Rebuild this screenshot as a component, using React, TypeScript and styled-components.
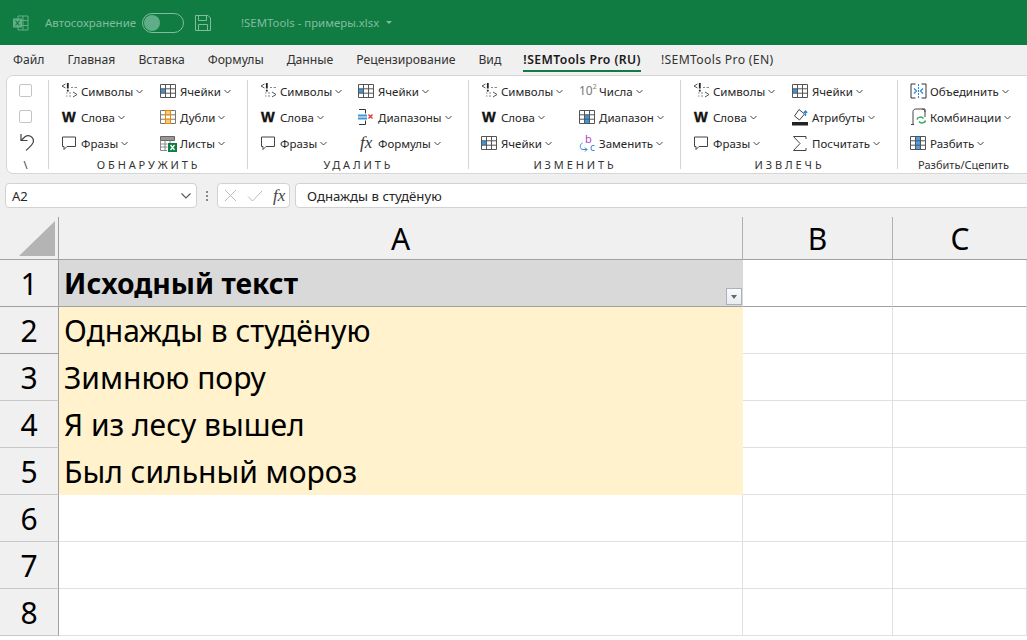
import React from "react";
import styled, { createGlobalStyle } from "styled-components";

const Global = createGlobalStyle`
  html, body { margin: 0; padding: 0; background: #f0f0f0; overflow: hidden; }
  #root { width: 1027px; height: 640px; }
`;

const font = `"Noto Sans", "Open Sans", sans-serif`;

const Page = styled.div`
  width: 1027px;
  height: 640px;
  overflow: hidden;
  display: flex;
  flex-direction: column;
  background: #f0f0f0;
  font-family: ${font};
  color: #262626;
`;

const TitleBar = styled.header`
  height: 45px;
  flex: none;
  background: #107c41;
  display: flex;
  align-items: center;
  padding-left: 13px;
  color: #80bda0;
  font-size: 12px;
`;
const AutoSave = styled.span`
  margin-left: 16px;
  width: 97px;
  font-size: 11.5px;
`;
const Toggle = styled.span`
  width: 42px;
  height: 20px;
  box-sizing: border-box;
  border: 1px solid #80bda0;
  border-radius: 10px;
  padding: 1px;
  display: block;
`;
const Knob = styled.span`
  display: block;
  width: 16px;
  height: 16px;
  border-radius: 50%;
  background: #60ae88;
`;
const SaveSlot = styled.span`
  margin-left: 11px;
  display: flex;
`;
const FileName = styled.span`
  margin-left: 30px;
  font-size: 11.4px;
`;
const Caret = styled.span`
  margin-left: 7px;
  border: 3px solid transparent;
  border-top: 3px solid #80bda0;
  margin-top: 3px;
`;

const Tabs = styled.nav`
  height: 30px;
  flex: none;
  display: flex;
  align-items: flex-start;
  padding-left: 13px;
  gap: 23px;
  font-size: 12.2px;
`;
const Tab = styled.span<{ $active?: boolean; $latin?: boolean }>`
  line-height: 30px;
  height: ${(p) => (p.$active ? "25px" : "30px")};
  font-weight: ${(p) => (p.$active ? 600 : 400)};
  color: ${(p) => (p.$active ? "#1a1a1a" : "#333")};
  letter-spacing: ${(p) => (p.$active ? "0.42px" : p.$latin ? "0.33px" : "0")};
  white-space: nowrap;
  border-bottom: ${(p) => (p.$active ? "2px solid #107c41" : "none")};
  margin-left: ${(p) => (p.$latin ? "-3px" : p.$active ? "-1px" : "0")};
`;

const Ribbon = styled.section`
  height: 99px;
  flex: none;
  width: 1040px;
  margin-left: 6px;
  box-sizing: border-box;
  background: #fff;
  border: 1px solid #d6d6d6;
  border-radius: 7px;
  display: flex;
  padding: 4px 0;
`;
const Group = styled.div<{ $width: number }>`
  width: ${(p) => p.$width}px;
  flex: none;
  box-sizing: border-box;
  border-right: 1px solid #d4d4d4;
  display: flex;
  flex-direction: column;
  padding-left: 12px;
  &:last-child { border-right: none; }
`;
const QuickGroup = styled.div`
  width: 42px;
  flex: none;
  box-sizing: border-box;
  border-right: 1px solid #d4d4d4;
  display: flex;
  flex-direction: column;
  align-items: center;
  padding: 4px 4px 0 0;
  color: #444;
`;
const Check = styled.span`
  width: 13px;
  height: 13px;
  box-sizing: border-box;
  border: 1px solid #c4c4c4;
  border-radius: 2px;
  margin-bottom: 13px;
  flex: none;
`;
const UndoSlot = styled.span`
  height: 18px;
  margin-top: -3px;
  margin-left: 3px;
  flex: none;
  display: flex;
`;
const Slash = styled.span`
  font-size: 11px;
  line-height: 14px;
  margin-top: 7px;
  flex: none;
`;
const Items = styled.div<{ $col: number }>`
  display: grid;
  grid-template-columns: ${(p) => p.$col}px auto;
  grid-auto-flow: column;
  grid-template-rows: repeat(3, 26px);
  justify-content: start;
  margin-top: -2px;
`;
const Item = styled.div`
  display: flex;
  align-items: center;
  font-size: 11.5px;
  color: #262626;
  white-space: nowrap;
`;
const IconSlot = styled.span`
  width: 20px;
  height: 18px;
  flex: none;
  display: flex;
  align-items: center;
  justify-content: flex-start;
`;
const Chevron = styled.svg`
  width: 7px;
  height: 5px;
  margin-left: 3px;
  margin-top: 1px;
  flex: none;
`;
const GroupLabel = styled.div<{ $plain?: boolean }>`
  height: 15px;
  line-height: 15px;
  margin: 1px 0 0 -11px;
  text-align: center;
  font-size: 11px;
  letter-spacing: ${(p) => (p.$plain ? "0" : "2.9px")};
  color: #333;
`;
const BoldW = styled.span`
  font-family: "Liberation Sans", sans-serif;
  font-weight: 700;
  font-size: 14.5px;
  line-height: 18px;
  color: #111;
  margin-left: 1px;
  -webkit-text-stroke: 0.4px #111;
`;
const FxGlyph = styled.span`
  font-family: "Liberation Serif", serif;
  font-style: italic;
  font-size: 17px;
  line-height: 18px;
  color: #333;
  margin-left: 2px;
`;
const Power = styled.span`
  font-size: 12px;
  color: #777;
  line-height: 18px;
  sup { font-size: 7px; line-height: 0; vertical-align: 6px; }
`;

const FormulaRow = styled.div`
  height: 25px;
  flex: none;
  margin: 9px 0 9px 5px;
  display: flex;
  align-items: stretch;
`;
const NameBox = styled.div`
  width: 192px;
  box-sizing: border-box;
  background: #fff;
  border: 1px solid #d2d2d2;
  border-radius: 4px;
  display: flex;
  align-items: center;
  justify-content: space-between;
  padding: 0 5px 0 6px;
  font-size: 13px;
`;
const Dots = styled.span`
  width: 20px;
  flex: none;
  display: flex;
  flex-direction: column;
  align-items: center;
  justify-content: center;
  gap: 2px;
  i { width: 2px; height: 2px; background: #888; display: block; }
`;
const FxBox = styled.div`
  width: 73px;
  box-sizing: border-box;
  background: #fff;
  border: 1px solid #d2d2d2;
  border-radius: 4px;
  display: flex;
  align-items: center;
  padding-left: 6px;
  gap: 10px;
`;
const FxText = styled.span`
  font-family: "Liberation Serif", serif;
  font-style: italic;
  font-size: 17px;
  color: #444;
`;
const FormulaInput = styled.div`
  flex: 1;
  margin-left: 5px;
  margin-right: -6px;
  box-sizing: border-box;
  background: #fff;
  border: 1px solid #d2d2d2;
  border-radius: 4px 0 0 4px;
  padding-left: 11px;
  line-height: 24px;
  font-size: 13.2px;
  color: #262626;
`;

const Sheet = styled.div`
  flex: 1;
  display: grid;
  grid-template-columns: 59px 684px 150px 134px;
  grid-template-rows: 43px repeat(8, 47px);
  background: #fff;
  font-size: 30px;
  color: #000;
`;
const Corner = styled.div`
  background: #f0f0f0;
  border-right: 1px solid #a0a0a0;
  border-bottom: 1px solid #a0a0a0;
  display: flex;
  align-items: flex-end;
  justify-content: flex-end;
  padding: 0 3px 3px 0;
`;
const ColHead = styled.div<{ $last?: boolean }>`
  background: #f0f0f0;
  border-right: ${(p) => (p.$last ? "none" : "1px solid #b0b0b0")};
  border-bottom: 1px solid #a0a0a0;
  display: flex;
  align-items: center;
  justify-content: center;
`;
const RowHead = styled.div<{ $strong?: boolean }>`
  background: #f0f0f0;
  border-right: 1px solid #a0a0a0;
  border-bottom: 1px solid ${(p) => (p.$strong ? "#a0a0a0" : "#c8c8c8")};
  display: flex;
  align-items: center;
  justify-content: center;
`;
const Cell = styled.div<{ $fill?: string; $bold?: boolean; $strong?: boolean }>`
  position: relative;
  box-sizing: border-box;
  background: ${(p) => p.$fill ?? "#fff"};
  border-right: 1px solid ${(p) => (p.$fill ? p.$fill : "#e0e0e0")};
  border-bottom: 1px solid ${(p) => (p.$strong ? "#a0a0a0" : p.$fill ?? "#e0e0e0")};
  padding-left: 5px;
  display: flex;
  align-items: center;
  font-size: ${(p) => (p.$bold ? "28.3px" : "30px")};
  font-weight: ${(p) => (p.$bold ? 700 : 400)};
  white-space: nowrap;
  min-width: 0;
`;
const FilterButton = styled.span`
  position: absolute;
  right: 0;
  bottom: 1px;
  width: 16px;
  height: 17px;
  box-sizing: border-box;
  background: linear-gradient(#fafafa, #e8ecf2);
  border: 1px solid #a9b1bd;
  display: flex;
  align-items: center;
  justify-content: center;
  &::after {
    content: "";
    border: 3.5px solid transparent;
    border-top: 4px solid #666;
    margin-top: 4px;
  }
`;

const ChevronDown = () => (
  <Chevron viewBox="0 0 7 5">
    <path d="M.5 1 3.5 4 6.5 1" fill="none" stroke="#444" strokeWidth="1" />
  </Chevron>
);

const SymbolsIcon = () => (
  <svg width="17" height="16" viewBox="0 0 17 16" fill="none">
    <path d="M4.500 1 1 3l3.500 2" stroke="#555" strokeWidth="1" />
    <path d="M6.800 0v5.500M6.800 6.800v1.700" stroke="#222" strokeWidth="1.800" />
    <path d="M10 4.500h2M13.500 4.500h2.500M5 10h1.500M8 10h2M5 13h1.500M8 13h2" stroke="#888" strokeWidth="1" />
    <path d="M12 9l4 2.500L12 14" stroke="#555" strokeWidth="1" />
  </svg>
);

const BubbleIcon = () => (
  <svg width="16" height="16" viewBox="0 0 16 16" fill="none">
    <path d="M1.500 2h13v9.500H6L3 14.500V11.500H1.500z" stroke="#444" strokeWidth="1" />
  </svg>
);

const UndoIcon = () => (
  <svg width="16" height="18" viewBox="0 0 16 18" fill="none">
    <path d="M2 1v6.500h6.500" stroke="#444" strokeWidth="1.200" />
    <path d="M2 7.500 6 3.800C9.500 1 14.500 3.500 14.500 8c0 3-3 5.500-7.500 9.500" stroke="#444" strokeWidth="1.200" />
  </svg>
);

const GridIcon = ({ fill, line = "#555" }: { fill: string; line?: string }) => (
  <svg width="16" height="14" viewBox="0 0 16 14" fill="none">
    <path d={fill} fill="#3a96dd" />
    <path d="M.5.5h15v13H.5zM5.500.5v13M10.500.5v13M.5 4.800h15M.5 9.200h15" stroke={line} strokeWidth="1" />
  </svg>
);

const DupesIcon = () => (
  <svg width="16" height="14" viewBox="0 0 16 14" fill="none">
    <path d="M.5.5h15v13H.5zM.5 4.800h15M.5 9.200h15" stroke="#777" strokeWidth="1" />
    <path d="M5.500.5h5v4.300h-5zM5.500 9.200h5v4.300h-5z" fill="#f7c887" />
    <path d="M5.500.5h5v13h-5zM5.500 4.800h5M5.500 9.200h5" stroke="#ed8b00" strokeWidth="1" />
  </svg>
);

const SheetsIcon = () => (
  <svg width="17" height="17" viewBox="0 0 17 17" fill="none">
    <path d="M.5 1.500h14v4H.5z" fill="#999" stroke="#666" />
    <path d="M.5 5.500v10H7M5 5.500v10M10 5.500V8M.5 9h7M.5 12h7" stroke="#888" />
    <rect x="8" y="8" width="9" height="9" fill="#107c41" />
    <path d="M10.500 10l4 5m0-5-4 5" stroke="#fff" strokeWidth="1.300" />
  </svg>
);

const RangesIcon = () => (
  <svg width="18" height="16" viewBox="0 0 18 16" fill="none">
    <path d="M1 .5h6.500v4M7.500 11.500v4H1" stroke="#333" />
    <rect x="0" y="5.500" width="9" height="2" fill="#3a96dd" />
    <rect x="0" y="8.500" width="9" height="2" fill="#3a96dd" />
    <path d="M10.500 5.500l4 4m0-4-4 4" stroke="#e03030" strokeWidth="1.300" />
  </svg>
);

const ReplaceIcon = () => (
  <svg width="18" height="24" viewBox="0 -3 18 24" fill="none">
    <text x="6" y="9" fontSize="11" fontFamily="Noto Sans" fill="#b146c2">b</text>
    <text x="11" y="17" fontSize="10" fontFamily="Noto Sans" fill="#1f7fd4">c</text>
    <path d="M3.500 9C.5 10 .5 15.500 4 15.500h4M6 13.500l2 2-2 2" stroke="#2b88d8" strokeWidth="1" />
  </svg>
);

const BucketIcon = () => (
  <svg width="18" height="18" viewBox="0 0 18 18" fill="none">
    <path d="M7 1.500 2.500 8l5 4 5-6z" stroke="#444" />
    <path d="M13.500 8V3M11.800 4.700l1.700-1.700 1.700 1.700" stroke="#2b88d8" strokeWidth="1.300" />
    <rect x="0" y="14" width="16" height="3.500" fill="#222" />
  </svg>
);

const SigmaIcon = () => (
  <svg width="15" height="17" viewBox="0 0 15 17" fill="none">
    <path d="M14 4V1.500H1.500L8 8.500 1.500 15.500H14V13" stroke="#444" strokeWidth="1" />
  </svg>
);

const MergeIcon = () => (
  <svg width="17" height="16" viewBox="0 0 17 16" fill="none">
    <path d="M5.500 1H1v14h4.500M11.500 1H16v14h-4.500" stroke="#333" />
    <path d="M8.500 1v14" stroke="#2b88d8" strokeDasharray="2 1" />
    <path d="M4 5.500l2.500 2.500L4 10.500M13 5.500 10.500 8 13 10.500" stroke="#2b88d8" strokeWidth="1.300" />
  </svg>
);

const ComboIcon = () => (
  <svg width="17" height="18" viewBox="0 0 17 18" fill="none">
    <path d="M1 16.500h3M3 16V3.500C3 1.500 5 1 6 1h9v8M12 1c1.500 0 3 1 3 3" stroke="#444" />
    <path d="M7 11.500c.5-2.500 4.500-3.500 6.500-1M15.500 12.500c-.5 2.500-4.500 3.500-6.500 1" stroke="#30a850" strokeWidth="1.500" />
  </svg>
);

const SplitIcon = () => (
  <svg width="16" height="14" viewBox="0 0 16 14" fill="none">
    <rect x="5.500" y=".5" width="5" height="13" fill="#4aa0e6" />
    <path d="M.5.5h15v13H.5zM5.500.5v13M10.500.5v13M.5 4.800h15M.5 9.200h15" stroke="#555" />
  </svg>
);

const ExcelLogo = () => (
  <svg width="16" height="16" viewBox="0 0 16 16" fill="none">
    <path d="M5 1h10v14H5z" stroke="#60ae88" />
    <path d="M10 1v14M5 5.500h10M5 10.500h10" stroke="#60ae88" />
    <rect x="0" y="3.500" width="9" height="9" fill="#60ae88" />
    <path d="M2.500 5.500l4 5m0-5-4 5" stroke="#107c41" strokeWidth="1.200" />
  </svg>
);

const SaveIcon = () => (
  <svg width="16" height="16" viewBox="0 0 16 16" fill="none">
    <path d="M.5.5h12.500l2.500 2.500v12.500H.5z" stroke="#80bda0" />
    <path d="M3.500.5v5h8v-5M3.500 15.500V9.500h9v6" stroke="#80bda0" />
  </svg>
);

const cellTable = "M.5 4.800h5v4.400h-5z";
const midColumn = "M5.500 4.800h5v8.700h-5z";
const symbols = <SymbolsIcon />;
const words = <BoldW>W</BoldW>;
const phrases = <BubbleIcon />;
const cells = <GridIcon fill={cellTable} />;

type Entry = { icon: React.ReactNode; label: string };

const GroupItems = ({ col, left, right }: { col: number; left: Entry[]; right: Entry[] }) => (
  <Items $col={col}>
    {[...left, ...right].map((e, i) => (
      <Item key={i}>
        <IconSlot>{e.icon}</IconSlot>
        {e.label}
        <ChevronDown />
      </Item>
    ))}
  </Items>
);

const rows = [
  { n: 1, text: "Исходный текст", head: true },
  { n: 2, text: "Однажды в студёную" },
  { n: 3, text: "Зимнюю пору" },
  { n: 4, text: "Я из лесу вышел" },
  { n: 5, text: "Был сильный мороз" },
  { n: 6, text: "" },
  { n: 7, text: "" },
  { n: 8, text: "" },
];

export default function App() {
  return (
    <Page>
      <Global />
      <TitleBar>
        <ExcelLogo />
        <AutoSave>Автосохранение</AutoSave>
        <Toggle><Knob /></Toggle>
        <SaveSlot><SaveIcon /></SaveSlot>
        <FileName>!SEMTools - примеры.xlsx</FileName>
        <Caret />
      </TitleBar>
      <Tabs>
        <Tab>Файл</Tab>
        <Tab>Главная</Tab>
        <Tab>Вставка</Tab>
        <Tab>Формулы</Tab>
        <Tab>Данные</Tab>
        <Tab>Рецензирование</Tab>
        <Tab>Вид</Tab>
        <Tab $active>!SEMTools Pro (RU)</Tab>
        <Tab $latin>!SEMTools Pro (EN)</Tab>
      </Tabs>
      <Ribbon>
        <QuickGroup>
          <Check />
          <Check />
          <UndoSlot><UndoIcon /></UndoSlot>
          <Slash>\</Slash>
        </QuickGroup>
        <Group $width={199}>
          <GroupItems
            col={99}
            left={[
              { icon: symbols, label: "Символы" },
              { icon: words, label: "Слова" },
              { icon: phrases, label: "Фразы" },
            ]}
            right={[
              { icon: cells, label: "Ячейки" },
              { icon: <DupesIcon />, label: "Дубли" },
              { icon: <SheetsIcon />, label: "Листы" },
            ]}
          />
          <GroupLabel>ОБНАРУЖИТЬ</GroupLabel>
        </Group>
        <Group $width={221}>
          <GroupItems
            col={98}
            left={[
              { icon: symbols, label: "Символы" },
              { icon: words, label: "Слова" },
              { icon: phrases, label: "Фразы" },
            ]}
            right={[
              { icon: cells, label: "Ячейки" },
              { icon: <RangesIcon />, label: "Диапазоны" },
              { icon: <FxGlyph>fx</FxGlyph>, label: "Формулы" },
            ]}
          />
          <GroupLabel>УДАЛИТЬ</GroupLabel>
        </Group>
        <Group $width={212}>
          <GroupItems
            col={98}
            left={[
              { icon: symbols, label: "Символы" },
              { icon: words, label: "Слова" },
              { icon: cells, label: "Ячейки" },
            ]}
            right={[
              { icon: <Power>10<sup>2</sup></Power>, label: "Числа" },
              { icon: <GridIcon fill={midColumn} />, label: "Диапазон" },
              { icon: <ReplaceIcon />, label: "Заменить" },
            ]}
          />
          <GroupLabel>ИЗМЕНИТЬ</GroupLabel>
        </Group>
        <Group $width={217}>
          <GroupItems
            col={99}
            left={[
              { icon: symbols, label: "Символы" },
              { icon: words, label: "Слова" },
              { icon: phrases, label: "Фразы" },
            ]}
            right={[
              { icon: cells, label: "Ячейки" },
              { icon: <BucketIcon />, label: "Атрибуты" },
              { icon: <SigmaIcon />, label: "Посчитать" },
            ]}
          />
          <GroupLabel>ИЗВЛЕЧЬ</GroupLabel>
        </Group>
        <Group $width={130}>
          <Items $col={118}>
            {[
              { icon: <MergeIcon />, label: "Объединить" },
              { icon: <ComboIcon />, label: "Комбинации" },
              { icon: <SplitIcon />, label: "Разбить" },
            ].map((e) => (
              <Item key={e.label}>
                <IconSlot>{e.icon}</IconSlot>
                {e.label}
                <ChevronDown />
              </Item>
            ))}
          </Items>
          <GroupLabel $plain>Разбить/Сцепить</GroupLabel>
        </Group>
      </Ribbon>
      <FormulaRow>
        <NameBox>
          A2
          <svg width="10" height="6" viewBox="0 0 10 6" fill="none">
            <path d="M.5.5l4.500 4.500L9.500.5" stroke="#555" strokeWidth="1.100" />
          </svg>
        </NameBox>
        <Dots><i /><i /><i /></Dots>
        <FxBox>
          <svg width="13" height="13" viewBox="0 0 13 13" fill="none">
            <path d="M1 1l11 11M12 1 1 12" stroke="#bbb" />
          </svg>
          <svg width="16" height="12" viewBox="0 0 16 12" fill="none">
            <path d="M1 6.500 5.500 11 15 1" stroke="#bbb" />
          </svg>
          <FxText>fx</FxText>
        </FxBox>
        <FormulaInput>Однажды в студёную</FormulaInput>
      </FormulaRow>
      <Sheet>
        <Corner>
          <svg width="36" height="35" viewBox="0 0 36 35">
            <path d="M36 0v35H0z" fill="#b4b4b4" />
          </svg>
        </Corner>
        <ColHead>A</ColHead>
        <ColHead>B</ColHead>
        <ColHead $last>C</ColHead>
        {rows.map((r) => (
          <React.Fragment key={r.n}>
            <RowHead $strong={r.n < 3}>{r.n}</RowHead>
            <Cell
              $fill={r.head ? "#d9d9d9" : r.n < 6 ? "#fff2cc" : undefined}
              $bold={r.head}
              $strong={r.head}
            >
              {r.text}
              {r.head && <FilterButton />}
            </Cell>
            <Cell $strong={r.head} />
            <Cell $strong={r.head} />
          </React.Fragment>
        ))}
      </Sheet>
    </Page>
  );
}
